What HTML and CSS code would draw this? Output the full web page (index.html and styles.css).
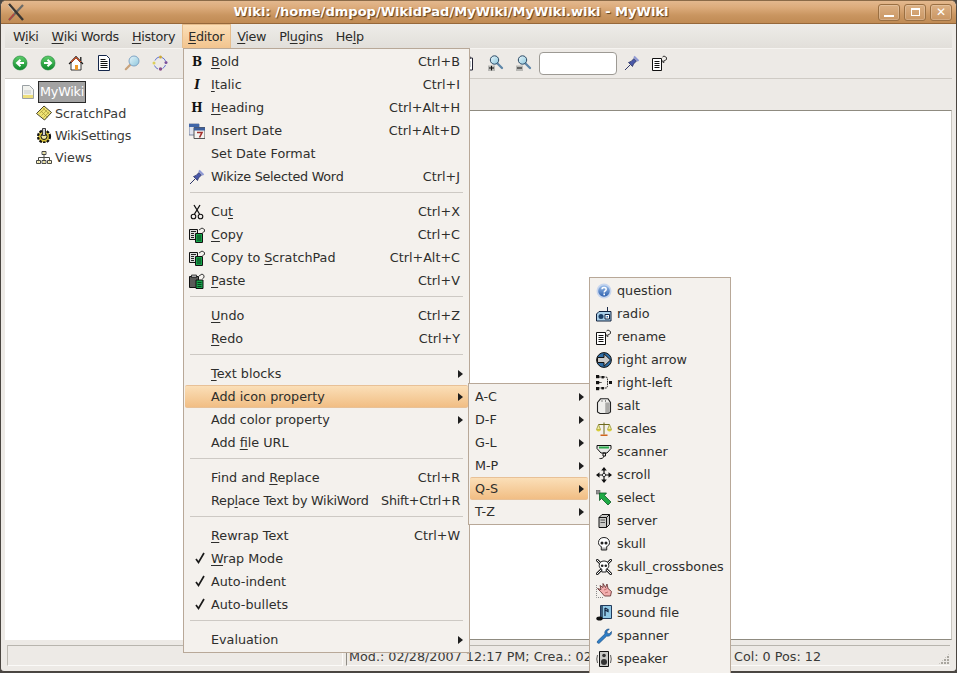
FILE: index.html
```html
<!DOCTYPE html>
<html lang="en">
<head>
<meta charset="utf-8">
<title>WikidPad</title>
<link rel="stylesheet" href="styles.css">
</head>
<body>
<svg class="defs" width="0" height="0" aria-hidden="true">
  <defs>
    <linearGradient id="gGreen" x1="0" y1="0" x2="0" y2="1"><stop offset="0" stop-color="#5fce6b"/><stop offset="1" stop-color="#0d8a2c"/></linearGradient>
    <linearGradient id="gLens" x1="0" y1="0" x2="1" y2="1"><stop offset="0" stop-color="#e8f6fb"/><stop offset="1" stop-color="#8cc6dc"/></linearGradient>
    <linearGradient id="gBlue" x1="0" y1="0" x2="0" y2="1"><stop offset="0" stop-color="#9ec0ea"/><stop offset="1" stop-color="#2c5fae"/></linearGradient>
    <symbol id="back" viewBox="0 0 16 16"><circle cx="8" cy="8" r="7" fill="url(#gGreen)" stroke="#1c7d35" stroke-width=".6"/><path d="M12 8H6M8.500 4.800 5 8l3.500 3.200" fill="none" stroke="#fff" stroke-width="2"/></symbol>
    <symbol id="forward" viewBox="0 0 16 16"><circle cx="8" cy="8" r="7" fill="url(#gGreen)" stroke="#1c7d35" stroke-width=".6"/><path d="M4 8h6M7.500 4.800 11 8l-3.500 3.200" fill="none" stroke="#fff" stroke-width="2"/></symbol>
    <symbol id="home" viewBox="0 0 16 16"><path d="M3 8v7h10V8L8 3z" fill="#fff" stroke="#222" stroke-width=".9"/><path d="M1 9l7-7.500L15 9" fill="none" stroke="#1a1a1a" stroke-width="1.100"/><path d="M3 7l5-4.500L13 7" fill="none" stroke="#d2552a" stroke-width="1.200"/><path d="M12 2h1.500v4H12z" fill="#333"/><path d="M7 10h3v5H7z" fill="#f09a28"/></symbol>
    <symbol id="page" viewBox="0 0 16 16"><path d="M2.500.5h8l3 3v12h-11z" fill="#fff" stroke="#14264a"/><path d="M4.500 4.500h5M4.500 6.500h7M4.500 8.500h7M4.500 10.500h7M4.500 12.500h7" stroke="#111" fill="none"/></symbol>
    <symbol id="search" viewBox="0 0 16 16"><path d="M6.500 9.500 1.800 14.200" stroke="#c9a37c" stroke-width="2.200" stroke-linecap="round"/><circle cx="10" cy="6" r="5" fill="url(#gLens)" stroke="#7fa4c4"/></symbol>
    <symbol id="cycle" viewBox="0 0 16 16"><path d="M3 5.500A6 6 0 0 1 7 2M10 2.500a6 6 0 0 1 3.500 3.500M13.500 10a6 6 0 0 1-3 3.500M6 14a6 6 0 0 1-3.500-3.500" fill="none" stroke="#5566cc" stroke-width=".9"/><circle cx="8.500" cy="2" r="1.500" fill="#c9a63a"/><circle cx="14" cy="7.500" r="1.500" fill="#7a4f9c"/><circle cx="8.500" cy="14" r="1.700" fill="#8a4f8c"/><circle cx="2" cy="8" r="1.500" fill="#dccf5c"/></symbol>
    <symbol id="clip" viewBox="0 0 16 16"><path d="M3.500 3h9v12h-9z" fill="#fff" stroke="#223"/><path d="M6 1.500h4V4H6z" fill="#dde" stroke="#223"/><path d="M5.500 7h5M5.500 9h5M5.500 11h5" stroke="#345"/></symbol>
    <symbol id="zoomin" viewBox="0 0 16 16"><path d="M8.500 7.500 14 13" stroke="#5e86a8" stroke-width="2.300" stroke-linecap="round"/><circle cx="6.500" cy="5" r="4.200" fill="url(#gLens)" stroke="#2d4a66"/><path d="M0 10.500h7v5.500H0z" fill="#b9b9b6"/><path d="M1 13h5M3.500 10.800v4.600" stroke="#111" stroke-width="1"/></symbol>
    <symbol id="zoomout" viewBox="0 0 16 16"><path d="M8.500 7.500 14 13" stroke="#5e86a8" stroke-width="2.300" stroke-linecap="round"/><circle cx="6.500" cy="5" r="4.200" fill="url(#gLens)" stroke="#2d4a66"/><path d="M0 10.500h7v5.500H0z" fill="#b9b9b6"/><path d="M1 13h5" stroke="#111" stroke-width="1"/></symbol>
    <symbol id="pin" viewBox="0 0 16 16"><path d="M1 15l5-5" stroke="#30386a" stroke-width="1"/><path d="M4.500 7.500l4 4 1-2.500 3-3-2.500-2.500-3 3z" fill="#4a58a8" stroke="#1e2658" stroke-width=".7"/><path d="M10 1.500l4.500 4.500" stroke="#8f99d4" stroke-width="2"/></symbol>
    <symbol id="rename" viewBox="0 0 16 16"><path d="M.5 3.500h9v12h-9z" fill="#fff" stroke="#111"/><path d="M2.500 6.500h5M2.500 8.500h5M2.500 10.500h5M2.500 12.500h5" stroke="#111"/><path d="M11 6.500l3.500-2v-2l-2.500-1.500-1.500 1M10.500 5.500l.5 2 1.500-.5" fill="none" stroke="#222" stroke-width=".9"/></symbol>
    <symbol id="calendar" viewBox="0 0 16 16"><path d="M0 1h10v11H0z" fill="#dfe3ee" stroke="#5a6a8e" stroke-width=".8"/><path d="M0 1h10v3H0z" fill="#4166a8"/><path d="M5 4.500h11v11H5z" fill="#f4f3f0" stroke="#555"/><path d="M5 4.500h11v3H5z" fill="#3c5f9c"/><path d="M8 9.500h5l-2.500 5" fill="none" stroke="#a3312d" stroke-width="1.600"/></symbol>
    <symbol id="cut" viewBox="0 0 16 16"><path d="M5 1l5.500 9M11 1 5.500 10" stroke="#111" stroke-width="1.300" fill="none"/><circle cx="4.500" cy="12.500" r="2.300" fill="none" stroke="#111" stroke-width="1.100"/><circle cx="11.500" cy="12.500" r="2.300" fill="none" stroke="#111" stroke-width="1.100"/></symbol>
    <symbol id="copy" viewBox="0 0 16 16"><path d="M.5 2.500h8v10h-8z" fill="#ddd" stroke="#111"/><path d="M2 4.500h5M2 6.500h3M2 8.500h3M2 10.500h3" stroke="#222"/><path d="M6.500 6.500h7v9h-7z" fill="#fff" stroke="#111"/><path d="M7 7h6v8H7z" fill="#17a34a"/><path d="M8 9h4M8 11h4M8 13h4" stroke="#0a3d1c"/><path d="M10 3l3-2 2.500 1.500v2l-2 1" fill="none" stroke="#222" stroke-width=".9"/></symbol>
    <symbol id="paste" viewBox="0 0 16 16"><path d="M.5 3.500h9v11h-9z" fill="#5a5a58" stroke="#111"/><path d="M2.500 2h5v2.500h-5z" fill="#aaa" stroke="#111" stroke-width=".7"/><path d="M7 7h7v8.500H7z" fill="#17a34a" stroke="#111"/><path d="M8.500 9.500h4M8.500 11.500h4M8.500 13.500h4" stroke="#0a3d1c"/><path d="M10 3l3-2 2 1.500v2l-1.500 1" fill="none" stroke="#222" stroke-width=".9"/></symbol>
    <symbol id="check" viewBox="0 0 16 16"><path d="M7 8l2.500 3.500L15 2" fill="none" stroke="#1a1a1a" stroke-width="1.700"/></symbol>
    <symbol id="root" viewBox="0 0 16 16"><path d="M1.500 1.500h7l4 4v9h-11z" fill="#f1f2ee" stroke="#9aa0a4"/><path d="M3 7h7M3 9h7" stroke="#c5c9c9"/><path d="M2 11h10v3H2z" fill="#eedf7c"/></symbol>
    <symbol id="note" viewBox="0 0 16 16"><path d="M.5 8.500 8 1l7.500 6.500L8.500 15z" fill="#f1e474" stroke="#33301c" stroke-width=".9"/><path d="M3.500 8.500 9 3.300M5.500 10.500 11 5.200M7.500 12.500 13 7.200M4.500 5.500l7 7M7 3.200l6.500 6" stroke="#a39638" stroke-width=".7"/></symbol>
    <symbol id="gear" viewBox="0 0 16 16"><circle cx="8" cy="9.500" r="6" fill="#d8c23a" stroke="#111" stroke-width="2.200" stroke-dasharray="2.600 1.200"/><circle cx="8" cy="9.500" r="3" fill="#efe7a0" stroke="#111" stroke-width="1"/><path d="M6.500 1.500h3v7h-3z" fill="#cfcfd2" stroke="#111" stroke-width=".8"/></symbol>
    <symbol id="views" viewBox="0 0 16 16"><path d="M6 2.500h4v3H6zM.5 11.500h4v3h-4zM6 11.500h4v3H6zM11.500 11.500h4v3h-4z" fill="#fff" stroke="#4a4a44"/><path d="M8 5.500v6M2.500 11.500v-3h11v3" fill="none" stroke="#4a4a44"/><path d="M1.500 13h2M7 13h2M12.500 13h2M7 4h2" stroke="#d8c13a"/></symbol>
    <symbol id="question" viewBox="0 0 16 16"><circle cx="8" cy="8" r="7.500" fill="#c8d6ee"/><circle cx="8" cy="8" r="5.800" fill="url(#gBlue)"/><path d="M6 6.300C6 4 10.200 4 10.200 6.300 10.200 8 8.200 7.800 8.200 9.500" fill="none" stroke="#fff" stroke-width="1.500"/><path d="M7.400 10.600h1.600v1.600H7.400z" fill="#fff"/></symbol>
    <symbol id="radio" viewBox="0 0 16 16"><path d="M11.500 1v5" stroke="#1a2a48"/><path d="M1.500 7 3 5.500h12V15H.5V8z" fill="#a9cfe9" stroke="#10223f"/><circle cx="5" cy="10.500" r="2.500" fill="#1c3f66"/><path d="M9 8.500h4.500V13H9z" fill="#fff" stroke="#10223f"/><path d="M10.500 10h1.500v1.500h-1.500z" fill="#2f6fb0"/></symbol>
    <symbol id="rarrow" viewBox="0 0 16 16"><circle cx="8" cy="8" r="7.400" fill="#2f6ea8" stroke="#111"/><path d="M1.500 5.500H8V1.800L14.500 8 8 14.200v-3.700H1.500z" fill="#c9c9c9" stroke="#111"/></symbol>
    <symbol id="rl" viewBox="0 0 16 16"><g fill="#111"><rect x="0" y="0" width="3.200" height="3.200"/><rect x="5.500" y="1" width="2.400" height="2.400"/><rect x="0" y="6" width="3.200" height="3.200"/><rect x="0" y="12" width="3.200" height="3.200"/><rect x="5.500" y="12" width="2.400" height="2.400"/><rect x="13" y="6" width="3" height="3"/></g><path d="M3.200 2h6.800q1.500 0 1.500 3v5q0 3-1.500 3H3.200M3.200 7.500H6" fill="none" stroke="#111" stroke-width="1" stroke-dasharray="1.500 .8"/></symbol>
    <symbol id="salt" viewBox="0 0 16 16"><path d="M1.500 4.500 4.500.8h7.500l2.500 3.700v9.500l-2.500 1.500H4l-2.500-1.500z" fill="#eeeeec" stroke="#222" stroke-width="1.100"/><path d="M11.500 4.500v11" stroke="#7e7e7c" stroke-width="4.500" opacity=".6"/><path d="M5.500 3h1M9 3h1" stroke="#222"/></symbol>
    <symbol id="scales" viewBox="0 0 16 16"><path d="M8 1.500v12M2.500 3.500h11" stroke="#6e6a1e" stroke-width="1"/><path d="M.5 8.500 2.500 3.500 4.500 8.500zM11.500 8.500l2-5 2 5z" fill="#f3ee9a" stroke="#8a862a" stroke-width=".7"/><path d="M0 8.500h5Q4.500 10.500 2.500 10.500T0 8.500zM11 8.500h5q-.5 2-2.500 2t-2.500-2z" fill="#d8cf3a"/><path d="M4.500 13.500h7v1.500h-7z" fill="#d0651f"/></symbol>
    <symbol id="scanner" viewBox="0 0 16 16"><path d="M1 1.500h14v3L11 9H5L1 4.500z" fill="#e8e8e6" stroke="#111"/><path d="M3 2.500h10v2H3z" fill="#29a84a"/><path d="M7 9h2.500v3H7zM8 12c0 2-3 3-4.500 2.500" fill="none" stroke="#111"/></symbol>
    <symbol id="scroll" viewBox="0 0 16 16"><path d="M8 1v14M1 8h14" stroke="#111" stroke-width="1.200"/><path d="M8 0 5.200 3.500h5.600zM8 16l-2.800-3.500h5.600zM0 8l3.500-2.800v5.600zM16 8l-3.500-2.800v5.600z" fill="#111"/><circle cx="8" cy="8" r="1.600" fill="#fff" stroke="#111" stroke-width=".8"/></symbol>
    <symbol id="select" viewBox="0 0 16 16"><path d="M0 0h4v4H0z" fill="#8f8f8f" stroke="#555" stroke-width=".5"/><path d="M3.500 3 10.500 3 8.500 5.500 15 12l-3 3-6.500-6.500L3.500 10.500z" fill="#1faa45" stroke="#0b5c25" stroke-width=".8"/></symbol>
    <symbol id="server" viewBox="0 0 16 16"><path d="M3 4.500 6 1.500h7.500v10l-3 3H3z" fill="#c9c9c6" stroke="#111"/><path d="M3 4.500h7.500v10M10.500 4.500l3-3" fill="none" stroke="#111"/><path d="M4.500 7h4.500M4.500 9.500h4.500" stroke="#555"/></symbol>
    <symbol id="skull" viewBox="0 0 16 16"><path d="M8 1.500c-3.300 0-5.500 2-5.500 5 0 2.200 1 3.300 2.800 4V14h5.400v-3.500c1.800-.7 2.800-1.800 2.800-4 0-3-2.200-5-5.500-5z" fill="#fff" stroke="#222"/><circle cx="6" cy="7" r="1.500" fill="#222"/><circle cx="10" cy="7" r="1.500" fill="#222"/><path d="M7 14v-2.500M9 14v-2.500" stroke="#222" stroke-width=".7"/></symbol>
    <symbol id="crossbones" viewBox="0 0 16 16"><path d="M1 1l14 14M15 1 1 15" stroke="#222" stroke-width="2.600" stroke-linecap="round"/><path d="M1 1l14 14M15 1 1 15" stroke="#fff" stroke-width="1" stroke-linecap="round"/><path d="M8 2c-3 0-4.800 1.800-4.800 4.500 0 2 1 3 2.600 3.600V13h4.400v-2.900c1.600-.6 2.600-1.600 2.600-3.600C12.800 3.800 11 2 8 2z" fill="#fff" stroke="#222"/><circle cx="6.200" cy="6.700" r="1.300" fill="#222"/><circle cx="9.800" cy="6.700" r="1.300" fill="#222"/></symbol>
    <symbol id="smudge" viewBox="0 0 16 16"><path d="M1.500 6.500 5 7.500 4 3.500l3 2L7 1.500l2.500 4L11 2l1 4.500 3.500 3-1 4.500H8.500L4.500 9.500z" fill="#f2aeae" stroke="#5a2626" stroke-width=".8"/><path d="M8 8l3.500-1.500M9 11l3-1" stroke="#a55" stroke-width=".7"/><path d="M.5 3v12.500H8" fill="none" stroke="#888" stroke-dasharray="1 1"/></symbol>
    <symbol id="soundfile" viewBox="0 0 16 16"><path d="M4.500.5h11v13h-11z" fill="#90c8e6" stroke="#223a5c"/><path d="M9 3v8M9 3l3 1.500V6.500L9 5" fill="none" stroke="#10223f" stroke-width="1.200"/><path d="M6 1v12" stroke="#10223f" stroke-width="1.300"/><ellipse cx="3.500" cy="13.500" rx="3.200" ry="2" fill="#111"/></symbol>
    <symbol id="spanner" viewBox="0 0 16 16"><path d="M1.500 13 9 5.800c-.7-2 .5-4.800 4.300-4.800L11 3.500l.3 1.900 1.900.4L15.500 3.500c.4 3.500-2.400 5.300-4.700 4.500L3.500 15c-1 .9-3 0-2-2z" fill="#2f7ec6" stroke="#12467e" stroke-width=".6"/></symbol>
    <symbol id="speaker" viewBox="0 0 16 16"><path d="M3.500 .5h9v15h-9z" fill="#c9c9c6" stroke="#111"/><circle cx="8" cy="4.500" r="1.800" fill="#333"/><circle cx="8" cy="11" r="3" fill="#333"/><path d="M1.500 4Q0 8 1.500 12M14.500 4q1.500 4 0 8" fill="none" stroke="#333" stroke-width=".8"/></symbol>
    <symbol id="wmlogo" viewBox="0 0 20 20"><path d="M3 18 17 3" stroke="#6b6b68" stroke-width="2.200"/><path d="M3 2l14 16" stroke="#3a3632" stroke-width="2.400"/><path d="M2 3l6 7" stroke="#c9c3b4" stroke-width=".9"/><path d="M3 18l5-6" stroke="#b9413a" stroke-width="1.400"/></symbol>
  </defs>
</svg>

<div class="window">
  <header class="titlebar">
    <svg class="wm-logo"><use href="#wmlogo"/></svg>
    <div class="title">Wiki: /home/dmpop/WikidPad/MyWiki/MyWiki.wiki - MyWiki</div>
    <div class="wm-buttons">
      <div class="wm-btn"><span class="g-min"></span></div>
      <div class="wm-btn"><span class="g-max"></span></div>
      <div class="wm-btn g-close">✕</div>
    </div>
  </header>

  <nav class="menubar">
    <span class="mb-item">W<u>i</u>ki</span>
    <span class="mb-item"><u>W</u>iki Words</span>
    <span class="mb-item"><u>H</u>istory</span>
    <span class="mb-item open"><u>E</u>ditor</span>
    <span class="mb-item"><u>V</u>iew</span>
    <span class="mb-item">Pl<u>u</u>gins</span>
    <span class="mb-item">He<u>l</u>p</span>
  </nav>

  <div class="toolbar">
    <span class="tb"><svg class="ic"><use href="#back"/></svg></span>
    <span class="tb"><svg class="ic"><use href="#forward"/></svg></span>
    <span class="tb"><svg class="ic"><use href="#home"/></svg></span>
    <span class="tb"><svg class="ic"><use href="#page"/></svg></span>
    <span class="tb"><svg class="ic"><use href="#search"/></svg></span>
    <span class="tb"><svg class="ic"><use href="#cycle"/></svg></span>
    <span class="tb-gap"></span>
    <span class="tb"><svg class="ic"><use href="#clip"/></svg></span>
    <span class="tb"><svg class="ic"><use href="#zoomin"/></svg></span>
    <span class="tb"><svg class="ic"><use href="#zoomout"/></svg></span>
    <span class="tb-input"></span>
    <span class="tb"><svg class="ic"><use href="#pin"/></svg></span>
    <span class="tb"><svg class="ic"><use href="#rename"/></svg></span>
  </div>

  <main class="main">
    <aside class="tree">
      <div class="node root"><svg class="ic"><use href="#root"/></svg><span class="sel">MyWiki</span></div>
      <div class="node"><svg class="ic"><use href="#note"/></svg><span>ScratchPad</span></div>
      <div class="node"><svg class="ic"><use href="#gear"/></svg><span class="tight">WikiSettings</span></div>
      <div class="node"><svg class="ic"><use href="#views"/></svg><span>Views</span></div>
    </aside>
    <section class="notebook">
      <div class="editor"></div>
    </section>
  </main>

  <footer class="status">
    <div class="cell c1"></div>
    <div class="cell c2">Mod.: 02/28/2007 12:17 PM; Crea.: 02</div>
    <div class="cell c3">Col: 0 Pos: 12<span class="grip"></span></div>
  </footer>
</div>

<div class="menu m-editor">
  <div class="mi"><span class="mi-ic glyph serif">B</span><span class="lb"><u>B</u>old</span><span class="sc">Ctrl+B</span></div>
  <div class="mi"><span class="mi-ic glyph serif it">I</span><span class="lb"><u>I</u>talic</span><span class="sc">Ctrl+I</span></div>
  <div class="mi"><span class="mi-ic glyph serif">H</span><span class="lb"><u>H</u>eading</span><span class="sc">Ctrl+Alt+H</span></div>
  <div class="mi"><svg class="mi-ic"><use href="#calendar"/></svg><span class="lb">Insert Date</span><span class="sc">Ctrl+Alt+D</span></div>
  <div class="mi"><span class="mi-ic"></span><span class="lb">Set Date Format</span></div>
  <div class="mi"><svg class="mi-ic"><use href="#pin"/></svg><span class="lb tight">Wikize Selected Word</span><span class="sc">Ctrl+J</span></div>
  <div class="sep"></div>
  <div class="mi"><svg class="mi-ic"><use href="#cut"/></svg><span class="lb">Cu<u>t</u></span><span class="sc">Ctrl+X</span></div>
  <div class="mi"><svg class="mi-ic"><use href="#copy"/></svg><span class="lb"><u>C</u>opy</span><span class="sc">Ctrl+C</span></div>
  <div class="mi"><svg class="mi-ic"><use href="#copy"/></svg><span class="lb">Copy to <u>S</u>cratchPad</span><span class="sc">Ctrl+Alt+C</span></div>
  <div class="mi"><svg class="mi-ic"><use href="#paste"/></svg><span class="lb"><u>P</u>aste</span><span class="sc">Ctrl+V</span></div>
  <div class="sep"></div>
  <div class="mi"><span class="mi-ic"></span><span class="lb"><u>U</u>ndo</span><span class="sc">Ctrl+Z</span></div>
  <div class="mi"><span class="mi-ic"></span><span class="lb"><u>R</u>edo</span><span class="sc">Ctrl+Y</span></div>
  <div class="sep"></div>
  <div class="mi"><span class="mi-ic"></span><span class="lb"><u>T</u>ext blocks</span><span class="ar"></span></div>
  <div class="mi hl"><span class="mi-ic"></span><span class="lb">Add icon property</span><span class="ar"></span></div>
  <div class="mi"><span class="mi-ic"></span><span class="lb">Add color property</span><span class="ar"></span></div>
  <div class="mi"><span class="mi-ic"></span><span class="lb">Add <u>f</u>ile URL</span></div>
  <div class="sep"></div>
  <div class="mi"><span class="mi-ic"></span><span class="lb">Find and <u>R</u>eplace</span><span class="sc">Ctrl+R</span></div>
  <div class="mi"><span class="mi-ic"></span><span class="lb tight">Rep<u>l</u>ace Text by WikiWord</span><span class="sc tight">Shift+Ctrl+R</span></div>
  <div class="sep"></div>
  <div class="mi"><span class="mi-ic"></span><span class="lb"><u>R</u>ewrap Text</span><span class="sc">Ctrl+W</span></div>
  <div class="mi"><svg class="mi-ic"><use href="#check"/></svg><span class="lb"><u>W</u>rap Mode</span></div>
  <div class="mi"><svg class="mi-ic"><use href="#check"/></svg><span class="lb">Auto-indent</span></div>
  <div class="mi"><svg class="mi-ic"><use href="#check"/></svg><span class="lb">Auto-bullets</span></div>
  <div class="sep"></div>
  <div class="mi"><span class="mi-ic"></span><span class="lb">Evaluation</span><span class="ar"></span></div>
</div>

<div class="menu m-ranges">
  <div class="mi"><span class="lb">A-C</span><span class="ar"></span></div>
  <div class="mi"><span class="lb">D-F</span><span class="ar"></span></div>
  <div class="mi"><span class="lb">G-L</span><span class="ar"></span></div>
  <div class="mi"><span class="lb">M-P</span><span class="ar"></span></div>
  <div class="mi hl"><span class="lb">Q-S</span><span class="ar"></span></div>
  <div class="mi"><span class="lb">T-Z</span><span class="ar"></span></div>
</div>

<div class="menu m-icons">
  <div class="mi"><svg class="mi-ic"><use href="#question"/></svg><span class="lb">question</span></div>
  <div class="mi"><svg class="mi-ic"><use href="#radio"/></svg><span class="lb">radio</span></div>
  <div class="mi"><svg class="mi-ic"><use href="#rename"/></svg><span class="lb">rename</span></div>
  <div class="mi"><svg class="mi-ic"><use href="#rarrow"/></svg><span class="lb">right arrow</span></div>
  <div class="mi"><svg class="mi-ic"><use href="#rl"/></svg><span class="lb">right-left</span></div>
  <div class="mi"><svg class="mi-ic"><use href="#salt"/></svg><span class="lb">salt</span></div>
  <div class="mi"><svg class="mi-ic"><use href="#scales"/></svg><span class="lb">scales</span></div>
  <div class="mi"><svg class="mi-ic"><use href="#scanner"/></svg><span class="lb">scanner</span></div>
  <div class="mi"><svg class="mi-ic"><use href="#scroll"/></svg><span class="lb">scroll</span></div>
  <div class="mi"><svg class="mi-ic"><use href="#select"/></svg><span class="lb">select</span></div>
  <div class="mi"><svg class="mi-ic"><use href="#server"/></svg><span class="lb">server</span></div>
  <div class="mi"><svg class="mi-ic"><use href="#skull"/></svg><span class="lb">skull</span></div>
  <div class="mi"><svg class="mi-ic"><use href="#crossbones"/></svg><span class="lb">skull_crossbones</span></div>
  <div class="mi"><svg class="mi-ic"><use href="#smudge"/></svg><span class="lb">smudge</span></div>
  <div class="mi"><svg class="mi-ic"><use href="#soundfile"/></svg><span class="lb">sound file</span></div>
  <div class="mi"><svg class="mi-ic"><use href="#spanner"/></svg><span class="lb">spanner</span></div>
  <div class="mi"><svg class="mi-ic"><use href="#speaker"/></svg><span class="lb">speaker</span></div>
</div>
</body>
</html>
```

FILE: styles.css
```css
* { box-sizing: border-box; }
html, body { margin: 0; padding: 0; }
body {
  position: relative;
  width: 957px;
  height: 673px;
  overflow: hidden;
  background: #4a4744;
  font-family: "DejaVu Sans", sans-serif;
  font-size: 12.75px;
  color: #2e2e2c;
}
.defs { position: absolute; }
u { text-underline-offset: 2px; text-decoration-thickness: 1px; }
.tight { letter-spacing: -.25px; }

/* window frame */
.window {
  height: 672px;
  display: flex;
  flex-direction: column;
  background: #edeae6;
  border: 1px solid #4a4540;
  border-top-color: #8a6a48;
  border-radius: 6px 6px 4px 4px;
  overflow: hidden;
}
.titlebar {
  height: 23px;
  flex: none;
  display: flex;
  align-items: center;
  padding-left: 5px;
  background: linear-gradient(#e3b88e 0%, #dcab7b 30%, #c99560 65%, #c08b54 100%);
  border-bottom: 1px solid #96683a;
}
.wm-logo { width: 20px; height: 20px; flex: none; }
.title {
  flex: 1;
  text-align: center;
  font-size: 13.05px;
  font-weight: bold;
  color: #fff;
  text-shadow: 1px 1px 1px #5e3f1e;
  padding: 0 2px 2px 0;
}
.wm-buttons { display: flex; gap: 4px; padding-right: 4px; }
.wm-btn {
  width: 22px;
  height: 17px;
  border: 1px solid #9a6f42;
  border-radius: 3px;
  background: linear-gradient(#dcb084, #c99663);
  box-shadow: inset 0 0 0 1px rgba(255, 255, 255, .2);
  display: flex;
  align-items: center;
  justify-content: center;
  color: #fff;
}
.g-min { width: 10px; height: 2px; margin-top: 7px; background: #fff; }
.g-max { width: 9px; height: 8px; border: 1px solid #fff; border-top-width: 2px; }
.g-close { font-size: 12px; font-weight: bold; line-height: 1; }

/* menu bar */
.menubar {
  height: 25px;
  flex: none;
  display: flex;
  margin: 0 4px;
  padding-left: 1.5px;
  background: linear-gradient(#eeece8, #e2dfda);
  border-bottom: 1px solid #f6f4f1;
  letter-spacing: -.3px;
}
.mb-item { padding: 0 6.5px; line-height: 25px; color: #2b2b29; }
.mb-item.open {
  background: linear-gradient(#fbdfb8, #f2c48e);
  border: 1px solid #e6bd8c;
  border-bottom: none;
  padding: 0 5.5px;
  line-height: 24px;
}

/* tool bar */
.toolbar {
  height: 30px;
  flex: none;
  display: flex;
  align-items: center;
  margin: 0 4px;
  padding: 0 0 1px 1px;
  border-bottom: 1px solid #cfcbc5;
}
.tb { width: 28px; display: flex; justify-content: center; }
.tb-gap { width: 280px; }
.tb-input {
  width: 78px;
  height: 23px;
  margin: 1px 1px 0;
  background: #fff;
  border: 1px solid #9d9a94;
  border-radius: 4px;
}
.ic { width: 16px; height: 16px; flex: none; }

/* main split */
.main {
  flex: 1;
  min-height: 0;
  display: flex;
  margin: 0 4px;
}
.tree {
  width: 180px;
  background: #fff;
  padding: 2px 0 0 16px;
  flex: none;
  color: #3a3a38;
}
.node {
  height: 22px;
  display: flex;
  align-items: center;
  gap: 3px;
  padding-left: 15px;
}
.node.root { padding-left: 0; gap: 1px; margin-bottom: -1px; }
.sel {
  background: #a3a3a3;
  color: #fff;
  border: 1px solid #2a2a2a;
  padding: 0 1px;
  line-height: 20px;
  letter-spacing: -.2px;
}
.notebook {
  flex: 1;
  display: flex;
  flex-direction: column;
  padding-top: 31px;
  min-width: 0;
}
.editor {
  flex: 1;
  background: #fff;
  border: 1px solid #8f8b80;
  border-left-color: #b5b1a8;
  border-right-color: #c9c6bf;
}

/* status bar */
.status {
  height: 31px;
  flex: none;
  display: flex;
  padding: 5px 6px;
}
.cell {
  border-top: 1px solid #b8b5ae;
  border-bottom: 1px solid #fbfaf8;
  line-height: 22px;
  color: #3a3a38;
  white-space: nowrap;
  overflow: hidden;
}
.c1 { width: 336px; border-left: 1px solid #bdbab3; border-right: 1px solid #fbfaf8; flex: none; }
.c2 { width: 386px; margin-left: 3px; border-left: 1px solid #8f8c85; padding-left: 2px; flex: none; }
.c3 { flex: 1; padding-left: 2px; position: relative; }
.grip {
  position: absolute;
  right: 0;
  bottom: 0;
  width: 12px;
  height: 12px;
  background: radial-gradient(circle at 1px 1px, #a9a69f 1px, transparent 1px) 0 0 / 3px 3px;
  clip-path: polygon(100% 0, 100% 100%, 0 100%);
}

/* popup menus */
.menu {
  position: absolute;
  background: #f4f1ed;
  border: 1px solid #b8a898;
  padding: 1px 0;
  white-space: nowrap;
}
.m-editor { left: 183px; top: 48px; width: 287px; z-index: 1; }
.m-ranges { left: 468px; top: 383px; width: 122px; z-index: 2; }
.m-icons { left: 589px; top: 277px; width: 142px; padding-bottom: 4px; z-index: 3; }
.mi {
  height: 23px;
  margin: 0 1px;
  padding: 0 8px 0 4px;
  display: flex;
  align-items: center;
  border: 1px solid transparent;
  border-width: 1px 0;
  line-height: 21px;
  color: #2e2e2c;
}
.mi-ic { width: 16px; height: 16px; flex: none; margin-right: 6px; }
.m-ranges .mi { padding: 0 4px 0 5px; }
.m-icons .mi { padding: 0 0 0 5px; }
.m-icons .mi-ic { margin-right: 5px; }
.sc { margin-left: auto; }
.ar {
  margin-left: auto;
  width: 0;
  height: 0;
  border-left: 5px solid #1e1e1e;
  border-top: 4px solid transparent;
  border-bottom: 4px solid transparent;
}
.m-editor .ar { margin-right: -3px; }
.hl {
  background: linear-gradient(#fbdfb8, #f1be84);
  border-color: #e8c197;
  border-radius: 2px;
}
.sep {
  height: 1px;
  margin: 4px 6px 7px;
  background: #cdc9c4;
}
.glyph {
  text-align: center;
  line-height: 16px;
  color: #111;
}
.serif { font-family: "DejaVu Serif", "Liberation Serif", serif; font-size: 12px; font-weight: 900; }
.it { font-style: italic; }
```
